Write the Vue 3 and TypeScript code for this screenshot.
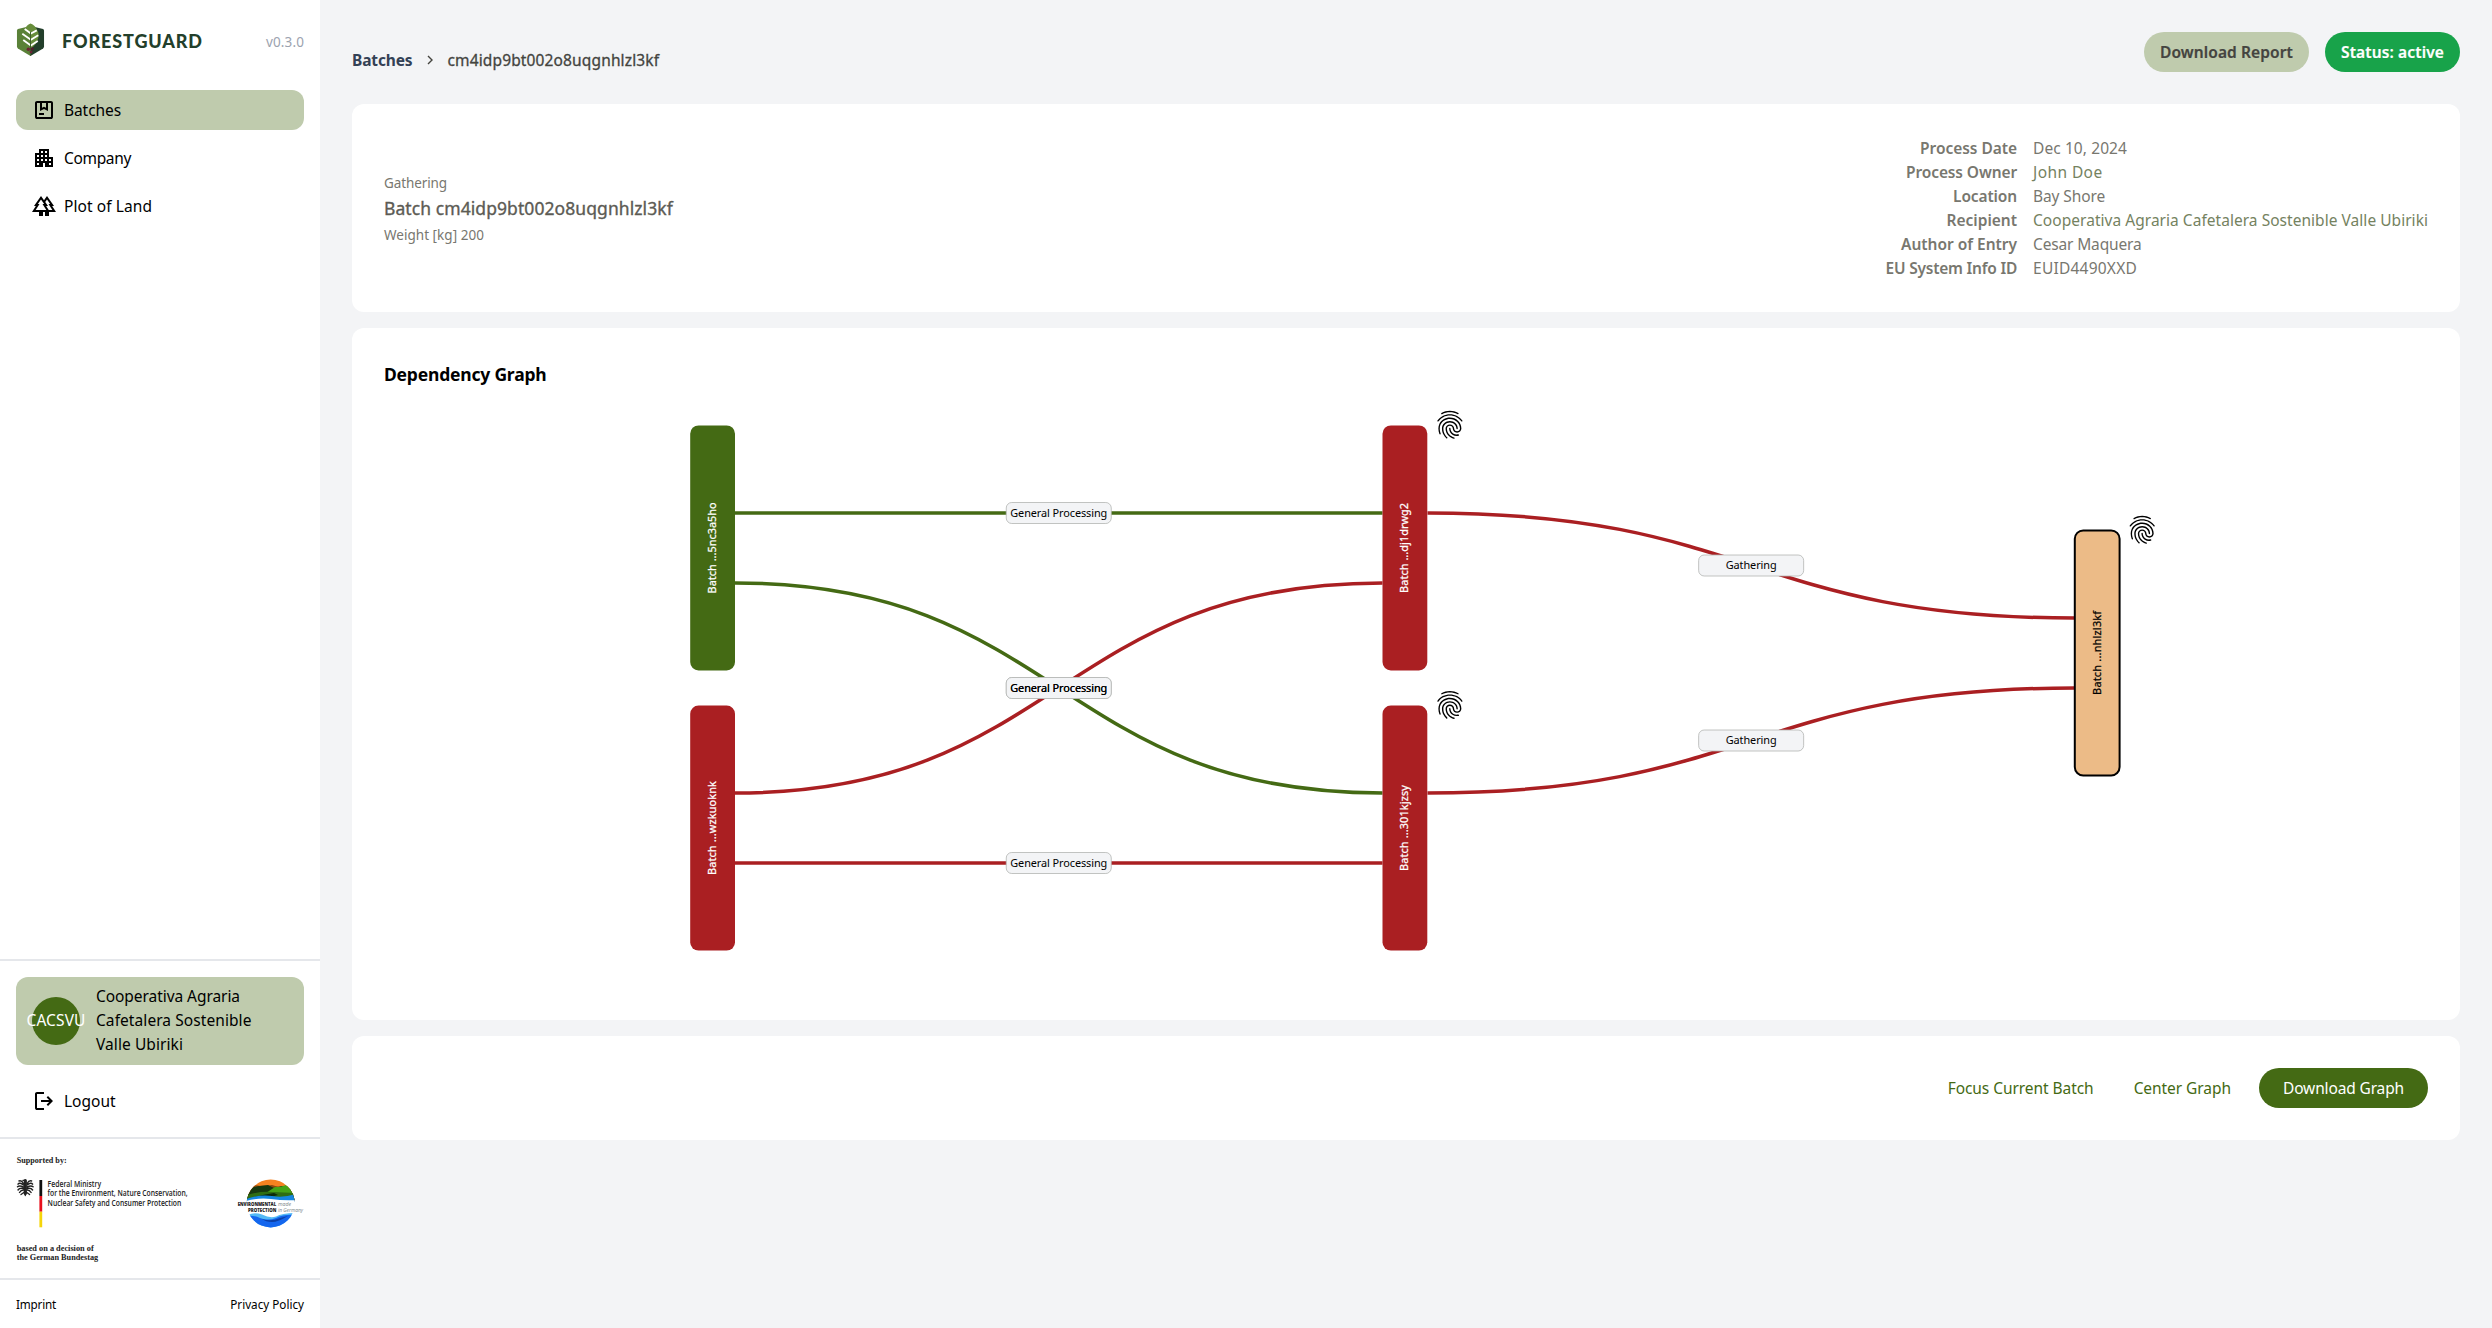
<script setup lang="ts">
interface NavItem { label: string; icon: string; active: boolean; tracking: number }
interface Detail { label: string; value: string; link: boolean; labelTracking: number; valueTracking: number }
interface GraphNode { id: string; label: string; x: number; y: number; length: number; kind: 'green' | 'red' | 'current'; proof: boolean }
interface Edge { x1: number; y1: number; x2: number; y2: number; color: string; label: string }

const APARTMENT = 'M17 11V3H7v4H3v14h8v-4h2v4h8V11h-4zM7 19H5v-2h2v2zm0-4H5v-2h2v2zm0-4H5V9h2v2zm4 4H9v-2h2v2zm0-4H9V9h2v2zm0-4H9V5h2v2zm4 8h-2v-2h2v2zm0-4h-2V9h2v2zm0-4h-2V5h2v2zm4 12h-2v-2h2v2zm0-4h-2v-2h2v2z'
const PACKAGE = 'M5 21q-.825 0-1.413-.588T3 19V5q0-.825.588-1.413T5 3h14q.825 0 1.413.588T21 5v14q0 .825-.588 1.413T19 21H5Zm0-2h14V5h-3v8l-4-2-4 2V5H5v14Zm2-2v-2h5v2H7Zm3-12v4.75l2-1 2 1V5h-4Z'
const FOREST = 'M20.14 12H22L15 2l-3 4.29L9 2 2 12h1.86L0 18h7v4h4v-4h2v4h4v-4h7l-3.86-6zM3.66 16l3.86-6H5.84L9 5.49 12.16 10h-1.68l3.86 6H3.66zM16.72 16l-2.58-4H16l-2.78-3.97L15 5.49 18.16 10h-1.68l3.86 6h-3.62z'
const LOGOUT = 'M5 21q-.825 0-1.413-.588T3 19V5q0-.825.588-1.413T5 3h7v2H5v14h7v2H5Zm11-4-1.375-1.45 2.55-2.55H9v-2h8.175l-2.55-2.55L16 7l5 5-5 5Z'
const FINGERPRINT = 'M17.81 4.47c-.08 0-.16-.02-.23-.06C15.66 3.42 14 3 12.01 3c-1.98 0-3.86.47-5.57 1.41-.24.13-.54.04-.68-.2-.13-.24-.04-.55.2-.68C7.82 2.52 9.86 2 12.01 2c2.13 0 3.99.47 6.03 1.52.25.13.34.43.21.67-.09.18-.26.28-.44.28zM3.5 9.72c-.1 0-.2-.03-.29-.09-.23-.16-.28-.47-.12-.7.99-1.4 2.25-2.5 3.75-3.27C9.98 4.04 14 4.03 17.15 5.65c1.5.77 2.76 1.86 3.75 3.25.16.22.11.54-.12.7-.23.16-.54.11-.7-.12-.9-1.26-2.04-2.25-3.39-2.94-2.87-1.47-6.54-1.47-9.4.01-1.36.7-2.5 1.7-3.4 2.96-.08.14-.23.21-.39.21zm6.25 12.07c-.13 0-.26-.05-.35-.15-.87-.87-1.34-1.43-2.01-2.64-.69-1.23-1.05-2.73-1.05-4.34 0-2.97 2.54-5.39 5.66-5.39s5.66 2.42 5.66 5.39c0 .28-.22.5-.5.5s-.5-.22-.5-.5c0-2.42-2.09-4.39-4.66-4.39-2.57 0-4.66 1.97-4.66 4.39 0 1.44.32 2.77.93 3.85.64 1.15 1.08 1.64 1.85 2.42.19.2.19.51 0 .71-.11.1-.24.15-.37.15zm7.17-1.85c-1.19 0-2.24-.3-3.1-.89-1.49-1.01-2.38-2.65-2.38-4.39 0-.28.22-.5.5-.5s.5.22.5.5c0 1.41.72 2.74 1.94 3.56.71.48 1.54.71 2.54.71.24 0 .64-.03 1.04-.1.27-.05.53.13.58.41.05.27-.13.53-.41.58-.57.11-1.07.12-1.21.12zM14.91 22c-.04 0-.09-.01-.13-.02-1.59-.44-2.63-1.03-3.72-2.1-1.4-1.39-2.17-3.24-2.17-5.22 0-1.62 1.38-2.94 3.08-2.94 1.7 0 3.08 1.32 3.08 2.94 0 1.07.93 1.94 2.08 1.94s2.08-.87 2.08-1.94c0-3.77-3.25-6.83-7.25-6.83-2.84 0-5.44 1.58-6.61 4.03-.39.81-.59 1.76-.59 2.8 0 .78.07 2.01.67 3.61.1.26-.03.55-.29.64-.26.1-.55-.04-.64-.29-.49-1.31-.73-2.61-.73-3.96 0-1.2.23-2.29.68-3.24 1.33-2.79 4.28-4.6 7.51-4.6 4.55 0 8.25 3.51 8.25 7.83 0 1.62-1.38 2.94-3.08 2.94s-3.08-1.32-3.08-2.94c0-1.07-.93-1.94-2.08-1.94s-2.08.87-2.08 1.94c0 1.71.66 3.31 1.87 4.51.95.94 1.86 1.46 3.27 1.85.27.07.42.35.35.61-.05.23-.26.38-.47.38z'

const nav: NavItem[] = [
  { label: 'Batches', icon: PACKAGE, active: true, tracking: -0.08 },
  { label: 'Company', icon: APARTMENT, active: false, tracking: -0.34 },
  { label: 'Plot of Land', icon: FOREST, active: false, tracking: 0.08 },
]

const details: Detail[] = [
  { label: 'Process Date', value: 'Dec 10, 2024', link: false, labelTracking: -0.04, valueTracking: 0.09 },
  { label: 'Process Owner', value: 'John Doe', link: true, labelTracking: -0.11, valueTracking: 0.41 },
  { label: 'Location', value: 'Bay Shore', link: false, labelTracking: -0.13, valueTracking: -0.11 },
  { label: 'Recipient', value: 'Cooperativa Agraria Cafetalera Sostenible Valle Ubiriki', link: true, labelTracking: 0, valueTracking: 0.034 },
  { label: 'Author of Entry', value: 'Cesar Maquera', link: false, labelTracking: -0.015, valueTracking: -0.154 },
  { label: 'EU System Info ID', value: 'EUID4490XXD', link: false, labelTracking: -0.22, valueTracking: 0.23 },
]

const GREEN = '#446a14'
const RED = '#aa1f22'

const nodes: GraphNode[] = [
  { id: 'a', label: 'Batch ...5nc3a5ho', x: 690.2, y: 425.4, length: 91, kind: 'green', proof: false },
  { id: 'b', label: 'Batch ...wzkuoknk', x: 690.2, y: 705.6, length: 94, kind: 'red', proof: false },
  { id: 'c', label: 'Batch ...dj1drwg2', x: 1382.5, y: 425.4, length: 90, kind: 'red', proof: true },
  { id: 'd', label: 'Batch ...301kjzsy', x: 1382.5, y: 705.6, length: 86, kind: 'red', proof: true },
  { id: 'e', label: 'Batch ...nhlzl3kf', x: 2074.8, y: 530.4, length: 84, kind: 'current', proof: true },
]

const edges: Edge[] = [
  { x1: 735, y1: 513, x2: 1382.5, y2: 513, color: GREEN, label: 'General Processing' },
  { x1: 735, y1: 583, x2: 1382.5, y2: 793, color: GREEN, label: 'General Processing' },
  { x1: 735, y1: 793, x2: 1382.5, y2: 583, color: RED, label: 'General Processing' },
  { x1: 735, y1: 863, x2: 1382.5, y2: 863, color: RED, label: 'General Processing' },
  { x1: 1427.5, y1: 513, x2: 2074.8, y2: 618, color: RED, label: 'Gathering' },
  { x1: 1427.5, y1: 793, x2: 2074.8, y2: 688, color: RED, label: 'Gathering' },
]

const curve = (e: Edge): string => {
  const m = (e.x1 + e.x2) / 2
  return `M${e.x1} ${e.y1}C${m} ${e.y1} ${m} ${e.y2} ${e.x2} ${e.y2}`
}
const mx = (e: Edge): number => (e.x1 + e.x2) / 2
const my = (e: Edge): number => (e.y1 + e.y2) / 2
const tracking = (px: number) => ({ letterSpacing: `${px}px` })
</script>

<template>
  <div class="app">
    <aside class="sidebar">
      <div class="brand">
        <svg class="brand-mark" viewBox="0 0 30 36">
          <path d="M15 3 28 6q1 .5 1 2v16q0 1.500-1 2.200L15 34Z" fill="#233f2b" />
          <path d="M15 3 2 6Q1 6.500 1 8v16q0 1.500 1 2.200L15 34Z" fill="#5a8138" />
          <path d="M15 .5q5 2 6.500 6 3 4 1.500 9-1.500 7-8 11V12L9.500 6Q10.500 2.500 15 .5Z" fill="#678d3b" />
          <path d="M15 11 21.500 7.500M15 17.500l8-5M15 23.500l7.500-5M15 10.500 9 6M15 17 6.500 11M15 23 7.500 17.500" stroke="#fff" stroke-width="1.900" fill="none" />
          <path d="M15 9v25" stroke="#3c5c2b" stroke-width="1" />
          <circle cx="12.800" cy="27" r="1.800" fill="#6b2436" /><circle cx="16.800" cy="26.800" r="1.700" fill="#4e1f2c" /><circle cx="15.500" cy="30" r="1.500" fill="#6b2436" />
        </svg>
        <span class="brand-name">FORESTGUARD</span>
        <span class="version">v0.3.0</span>
      </div>
      <nav class="nav">
        <a v-for="n in nav" :key="n.label" class="nav-item" :class="{ active: n.active }">
          <svg viewBox="0 0 24 24"><path :d="n.icon" fill-rule="evenodd" /></svg>
          <span :style="tracking(n.tracking)">{{ n.label }}</span>
        </a>
      </nav>
      <div class="account">
        <div class="org">
          <div class="avatar"><span>CACSVU</span></div>
          <div class="org-name">
            <span class="line-1">Cooperativa Agraria</span>
            <span class="line-2">Cafetalera Sostenible</span>
            <span class="line-3">Valle Ubiriki</span>
          </div>
        </div>
        <a class="nav-item">
          <svg viewBox="0 0 24 24"><path :d="LOGOUT" /></svg>
          <span>Logout</span>
        </a>
      </div>
      <div class="support">
        <svg viewBox="16 1155 288 110">
          <g class="serif">
            <text x="16.700" y="1162.700" textLength="50" lengthAdjust="spacingAndGlyphs">Supported by:</text>
            <text x="16.700" y="1250.500" textLength="77" lengthAdjust="spacingAndGlyphs">based on a decision of</text>
            <text x="16.700" y="1260" textLength="81.500" lengthAdjust="spacingAndGlyphs">the German Bundestag</text>
          </g>
          <g fill="none" stroke="#222" stroke-linecap="round">
            <path d="M25.300 1180.500v13" stroke-width="3.200" />
            <path d="M23.500 1183.500q-2-3.500-4.500-2.500M23.500 1185q-4-3-5.500-.8M23.500 1187q-4-2-6-.2M23.500 1188.500q-4-.8-5.500 1.500M23.500 1190q-2.500 0-4 2.500M27.100 1183.500q2-3.500 4.500-2.500M27.100 1185q4-3 5.500-.8M27.100 1187q4-2 6-.2M27.100 1188.500q4-.8 5.500 1.500M27.100 1190q2.500 0 4 2.500" stroke-width="1.450" />
            <path d="M24.500 1192l-3.500 2.500M26.100 1192l3.500 2.500M25.300 1193v2.500M25.300 1180.300h-2.400" stroke-width="1.300" />
          </g>
          <path d="M39.400 1180h2.800v16h-2.800z" fill="#111" />
          <path d="M39.400 1196h2.800v15.700h-2.800z" fill="#e8101c" />
          <path d="M39.400 1211.700h2.800v15.600h-2.800z" fill="#f5d50a" />
          <g class="ministry">
            <text x="47.600" y="1186.600" textLength="53.500" lengthAdjust="spacingAndGlyphs">Federal Ministry</text>
            <text x="47.600" y="1196.100" textLength="140" lengthAdjust="spacingAndGlyphs">for the Environment, Nature Conservation,</text>
            <text x="47.600" y="1205.700" textLength="133.700" lengthAdjust="spacingAndGlyphs">Nuclear Safety and Consumer Protection</text>
          </g>
          <clipPath id="globe"><circle cx="270.700" cy="1203.400" r="24" /></clipPath>
          <g clip-path="url(#globe)">
            <path d="M246 1179h50v22h-50z" fill="#f58220" />
            <path d="M246 1188q8-4 14-2 7 0 12-1 8 3 24 2v14h-50z" fill="#8a4a10" />
            <path d="M246 1190q7-3 13-4l9-1 6 3 8-2 14 5v9h-50z" fill="#17380f" />
            <path d="M266 1193l9-6 5 0 6-2 10 6v4q-14-3-30-2z" fill="#45a316" />
            <path d="M247 1195q12-4 26-3l22 1v7h-49z" fill="#2f6d12" />
            <path d="M254 1197q12-3 20-4l4 2-14 4z" fill="#0d2a0a" />
            <path d="M246 1199q14-5 26-3 12 2 24-2v8h-50z" fill="#1686e0" />
            <path d="M244 1201.500q13-4 27-2.500 13 2 27 1v13q-14 1-22 4-10 1-14-1-8-3-18-3z" fill="#fff" />
            <path d="M248 1215q6-3 14-.5 8 4 14 2 6-3.500 20-3.500v16h-49z" fill="#53b9f5" />
            <path d="M246 1216q8-1 14 2 8 3 16 0 8-4 20-3v14h-50z" fill="#1466ee" />
            <path d="M262 1219q9 3 18-1l8-2q-10 6-16 6t-10-3z" fill="#0b3fa6" />
          </g>
          <g class="epig">
            <text x="237.700" y="1206.200" textLength="38.500" lengthAdjust="spacingAndGlyphs" class="bold">ENVIRONMENTAL</text>
            <text x="278" y="1206.200" textLength="13" lengthAdjust="spacingAndGlyphs" class="slanted">made</text>
            <text x="248" y="1211.600" textLength="28.300" lengthAdjust="spacingAndGlyphs" class="bold">PROTECTION</text>
            <text x="278" y="1211.600" textLength="25" lengthAdjust="spacingAndGlyphs" class="slanted">in Germany</text>
          </g>
        </svg>
      </div>
      <div class="legal">
        <a class="imprint">Imprint</a>
        <a>Privacy Policy</a>
      </div>
    </aside>

    <main class="main">
      <header class="topbar">
        <div class="crumbs">
          <span class="crumb">Batches</span>
          <svg viewBox="0 0 8 12"><path d="M2 2l4 4-4 4" fill="none" stroke="#44443f" stroke-width="1.400" /></svg>
          <span class="here">cm4idp9bt002o8uqgnhlzl3kf</span>
        </div>
        <div class="pills">
          <span class="pill report">Download Report</span>
          <span class="pill status">Status: active</span>
        </div>
      </header>

      <section class="card info">
        <div class="batch">
          <p class="process">Gathering</p>
          <h2>Batch cm4idp9bt002o8uqgnhlzl3kf</h2>
          <p>Weight [kg] 200</p>
        </div>
        <dl>
          <template v-for="d in details" :key="d.label">
            <dt :style="tracking(d.labelTracking)">{{ d.label }}</dt>
            <dd :class="{ link: d.link }" :style="tracking(d.valueTracking)">{{ d.value }}</dd>
          </template>
        </dl>
      </section>

      <section class="card graph">
        <h3>Dependency Graph</h3>
        <svg viewBox="384 388 2044 600">
          <path v-for="(e, i) in edges" :key="'p' + i" :d="curve(e)" :stroke="e.color" fill="none" stroke-width="3.500" />
          <rect v-for="(e, i) in edges" :key="'r' + i" class="edge-box" :x="mx(e) - 52.500" :y="my(e) - 10.500" width="105" height="21" rx="5.500" />
          <text v-for="(e, i) in edges" :key="'t' + i" :x="mx(e)" :y="my(e) + 3.800" text-anchor="middle" class="edge-label" :textLength="e.label === 'Gathering' ? 51 : 97">{{ e.label }}</text>
          <g v-for="n in nodes" :key="n.id" class="node" :class="n.kind">
            <rect :x="n.x" :y="n.y" width="44.800" height="245" rx="8.400" />
            <text :transform="`translate(${n.x + 25.8} ${n.y + 122.5}) rotate(-90)`" text-anchor="middle" :textLength="n.length">{{ n.label }}</text>
            <path v-if="n.proof" :d="FINGERPRINT" :transform="`translate(${n.x + 50.6} ${n.y - 17.4}) scale(1.4)`" fill="#000" />
          </g>
        </svg>
      </section>

      <section class="card actions">
        <a class="btn">Focus Current Batch</a>
        <a class="btn">Center Graph</a>
        <a class="btn primary">Download Graph</a>
      </section>
    </main>
  </div>
</template>

<style>
body { margin: 0; background: #f3f4f6; }
</style>

<style scoped>
* { box-sizing: border-box; margin: 0; padding: 0; }
.app { display: flex; width: 100%; height: 1328px; overflow: hidden; font-family: "Noto Sans", sans-serif; font-size: 15.5px; line-height: 24px; color: #000; white-space: nowrap; background: #f3f4f6; }
.sidebar { width: 320px; flex: none; background: #fff; display: flex; flex-direction: column; }
.brand { height: 90px; padding: 23px 16px 0; display: flex; align-items: flex-start; }
.brand-mark { width: 29px; height: 35px; }
.brand-name { margin-left: 17px; margin-top: 6px; font-family: Lato, sans-serif; font-weight: 900; font-size: 18px; letter-spacing: 0.88px; color: #233f2b; }
.version { margin-left: auto; margin-top: 7px; font-size: 13.5px; letter-spacing: 0.12px; color: #9ca3af; }
.nav { display: flex; flex-direction: column; gap: 8px; padding: 0 16px; flex: 1; }
.nav-item { display: flex; align-items: center; gap: 8px; height: 40px; padding: 0 16px; border-radius: 12px; }
.nav-item.active { background: #bfcbad; }
.nav-item svg { width: 24px; height: 24px; }
.account { border-top: 2px solid #e5e7eb; padding: 16px; display: flex; flex-direction: column; gap: 16px; }
.org { height: 88px; background: #bfcbad; border-radius: 12px; padding: 0 16px; display: flex; align-items: center; gap: 16px; }
.avatar { width: 48px; height: 48px; border-radius: 50%; background: #446a14; color: #fff; display: flex; align-items: center; justify-content: center; flex: none; letter-spacing: 0.11px; padding-bottom: 2px; }
.org-name { display: flex; flex-direction: column; padding-bottom: 2px; }
.line-1 { letter-spacing: -0.06px; }
.line-2, .line-3 { letter-spacing: 0.076px; }
.support { border-top: 2px solid #e5e7eb; height: 141px; padding: 16px; }
.support svg { width: 288px; height: 110px; display: block; }
.support text { fill: #222; }
.serif { font-family: "Liberation Serif", serif; font-size: 9.2px; font-weight: 700; }
.ministry { font-family: "Open Sans", sans-serif; font-size: 8.3px; font-weight: 600; }
.epig { font-family: "Open Sans", sans-serif; font-size: 4.7px; }
.epig .bold { font-weight: 800; }
.epig .slanted { font-style: italic; fill: #7b8487; }
.legal { border-top: 2px solid #e5e7eb; height: 50px; padding: 0 16px; display: flex; align-items: center; justify-content: space-between; font-size: 11.7px; }
.imprint { letter-spacing: -0.19px; }
.main { flex: 1; padding: 32px; display: flex; flex-direction: column; gap: 16px; min-width: 0; }
.topbar { display: flex; justify-content: space-between; height: 40px; margin-bottom: 16px; align-items: flex-end; }
.crumbs { display: flex; align-items: center; }
.crumb { font-weight: 700; letter-spacing: -0.13px; color: #334155; }
.crumbs svg { width: 8px; height: 12px; margin: 0 13.5px 0 13.5px; }
.here { letter-spacing: 0.135px; color: #44443f; -webkit-text-stroke: 0.3px currentColor; }
.pills { display: flex; gap: 16px; }
.pill { height: 40px; border-radius: 20px; padding: 8px 16px; font-weight: 600; -webkit-text-stroke: 0.2px currentColor; }
.report { background: #bfcbad; color: #44443f; letter-spacing: 0.105px; }
.status { background: #18a34a; color: #fff; letter-spacing: 0.136px; }
.card { background: #fff; border-radius: 12px; padding: 32px; }
.info { height: 208px; display: flex; align-items: center; justify-content: space-between; color: #78776f; }
.batch { padding-top: 2px; }
.batch p { font-size: 13.5px; line-height: 20px; letter-spacing: 0.03px; }
.batch .process { letter-spacing: -0.1px; }
.batch h2 { font-size: 17.5px; line-height: 28px; font-weight: 400; letter-spacing: 0.077px; color: #5c5b54; margin: 1px 0 3px; -webkit-text-stroke: 0.35px currentColor; }
dl { display: grid; grid-template-columns: auto auto; column-gap: 16px; }
dt { text-align: right; font-weight: 600; }
dd.link { color: #75825f; }
.graph { height: 692px; }
.graph h3 { font-size: 17.5px; line-height: 28px; font-weight: 700; letter-spacing: -0.2px; }
.graph svg { display: block; width: 2044px; height: 600px; }
.edge-box { fill: #f3f4f6; stroke: #b3b5b3; stroke-width: 0.8; }
.edge-label { font-size: 10.9px; }
.node text { font-size: 10.9px; fill: #fff; stroke: #fff; stroke-width: 0.25; }
.node.green rect { fill: #446a14; }
.node.red rect { fill: #aa1f22; }
.node.current rect { fill: #ecbb87; stroke: #000; stroke-width: 2; }
.node.current text { fill: #000; stroke: #000; }
.actions { height: 104px; display: flex; justify-content: flex-end; gap: 8px; color: #446a14; }
.btn { height: 40px; padding: 8px 16px; border-radius: 20px; letter-spacing: -0.06px; }
.btn.primary { margin-left: 4px; padding: 8px 24px; background: #446a14; color: #fff; letter-spacing: -0.14px; }
</style>
